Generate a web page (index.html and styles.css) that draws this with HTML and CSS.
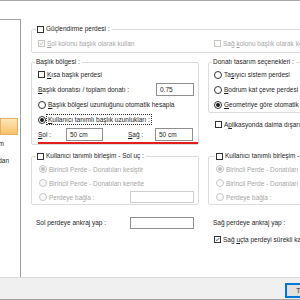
FILE: index.html
```html
<!DOCTYPE html>
<html>
<head>
    <meta charset="utf-8">
    <title>Perde Ayarları</title>
    <link rel="stylesheet" href="styles.css">
</head>
<body>
    <div class="window">
        <div class="main">
            <div class="sidebar">
                <ul class="nav">
                    <li class="nav-item active"></li>
                    <li class="nav-item end-m"><span>Donatım</span></li>
                    <li class="nav-item end-lan"><span>Tablodan</span></li>
                </ul>
            </div>

            <div class="content">
                <!-- Güçlendirme -->
                <fieldset class="group group-top">
                    <legend><label class="opt"><span class="box"></span><span>Güçlendirme perdesi :</span></label></legend>
                    <div class="pair">
                        <label class="opt off"><span class="box"><svg viewBox="0 0 7 7"><polyline points="1.2,3.6 2.8,5.1 5.8,1.6"/></svg></span><span><u>S</u>ol kolonu başlık olarak kullan</span></label>
                        <label class="opt off"><span class="box"></span><span>Sağ <u>k</u>olonu başlık olarak kullan</span></label>
                    </div>
                </fieldset>

                <div class="columns">
                    <!-- Başlık bölgesi -->
                    <fieldset class="group">
                        <legend>Başlık bölgesi :</legend>
                        <div class="row"><label class="opt"><span class="box"></span><span><u>K</u>ısa başlık perdesi</span></label></div>
                        <div class="row spread"><span><u>B</u>aşlık donatısı / toplam donatı :</span><span class="field">0.75</span></div>
                        <div class="row"><label class="opt"><span class="radio"></span><span><u>B</u>aşlık bölgesi uzunluğunu otomatik hesapla</span></label></div>
                        <div class="row"><label class="opt"><span class="radio on"></span><span class="focus"><u>K</u>ullanıcı tanımlı başlık uzunlukları :</span></label></div>
                        <div class="row marked">
                            <span class="lbl-sol"><u>S</u>ol :</span><span class="field w37">50 cm</span>
                            <span class="lbl-sag"><u>S</u>ağ :</span><span class="field">50 cm</span>
                        </div>
                    </fieldset>

                    <!-- Donatı tasarım -->
                    <div class="stack">
                        <fieldset class="group group-right">
                            <legend>Donatı tasarım seçenekleri :</legend>
                            <div class="row"><label class="opt"><span class="radio"></span><span>Ta<u>ş</u>ıyıcı sistem perdesi</span></label></div>
                            <div class="row"><label class="opt"><span class="radio"></span><span><u>B</u>odrum kat çevre perdesi</span></label></div>
                            <div class="row"><label class="opt"><span class="radio on"></span><span><u>G</u>eometriye göre otomatik</span></label></div>
                        </fieldset>
                        <div class="row after-group"><label class="opt"><span class="box"></span><span>A<u>p</u>likasyonda daima dışarı</span></label></div>
                    </div>

                    <!-- Sol uç -->
                    <fieldset class="group joint">
                        <legend><label class="opt"><span class="box"></span><span>Kullanıcı tanımlı birleşim - Sol uç :</span></label></legend>
                        <div class="row short"><label class="opt off"><span class="radio on"></span><span>Birincil Perde - Donatıları kesiştir</span></label></div>
                        <div class="row short"><label class="opt off"><span class="radio"></span><span>Birincil Perde - Donatıları kenetle</span></label></div>
                        <div class="row short spread"><label class="opt off"><span class="radio"></span><span>Perdeye bağla :</span></label><span class="field wide off"></span></div>
                    </fieldset>

                    <!-- Sağ uç -->
                    <fieldset class="group joint joint-right">
                        <legend><label class="opt"><span class="box"></span><span>Kullanıcı tanımlı birleşim - Sağ uç :</span></label></legend>
                        <div class="row short"><label class="opt off"><span class="radio on"></span><span>Birincil Perde - Donatıları kesiştir</span></label></div>
                        <div class="row short"><label class="opt off"><span class="radio"></span><span>Birincil Perde - Donatıları kenetle</span></label></div>
                        <div class="row short"><label class="opt off"><span class="radio"></span><span>Perdeye bağla :</span></label></div>
                    </fieldset>

                    <!-- Ankraj -->
                    <div class="row anchor spread"><span>Sol perdeye ankraj yap :</span><span class="field wide"></span></div>
                    <div class="anchor">
                        <div class="row anchor-text">Sağ perdeye ankraj yap :</div>
                        <div class="row anchor-check"><label class="opt"><span class="box"><svg viewBox="0 0 7 7"><polyline points="1.2,3.6 2.8,5.1 5.8,1.6"/></svg></span><span>Sağ <u>u</u>çta perdeyi sürekli kabul et</span></label></div>
                    </div>
                </div>
            </div>
        </div>

        <div class="footer">
            <button class="btn">Tamam</button>
        </div>
    </div>
</body>
</html>
```

FILE: styles.css
```css
* {
    box-sizing: border-box;
}
body {
    margin: 0;
    font-family: "Liberation Sans", Arial, sans-serif;
    font-size: 6.5px;
    color: #1e1e1e;
    background: #fff;
}
u {
    text-decoration-thickness: 1px;
    text-underline-offset: 1px;
}
.window {
    width: 300px;
    height: 300px;
    display: flex;
    flex-direction: column;
    border-top: 1px solid #a9a9a9;
    overflow: hidden;
}
.main {
    flex: 1;
    display: flex;
    min-height: 0;
}

/* sol liste */
.sidebar {
    width: 21px;
    flex: none;
    margin-top: 18px;
    border-top: 1px solid #a0a0a0;
    border-right: 1px solid #a0a0a0;
    overflow: hidden;
}
.nav {
    list-style: none;
    margin: 0;
    padding: 98px 0 0 0;
}
.nav-item {
    height: 17px;
    display: flex;
    align-items: center;
    justify-content: flex-end;
    white-space: nowrap;
}
.nav-item.active {
    margin-right: 2px;
    background: linear-gradient(#fee6b6, #f8c36c);
    border: 1px solid #e8b064;
}
.end-m {
    padding-right: 16px;
}
.end-lan {
    padding-right: 11px;
}

/* içerik */
.content {
    flex: 1;
    min-width: 0;
    padding: 23px 0 0 10px;
    overflow: hidden;
}
.group {
    margin: 0;
    padding: 0 0 0 6px;
    border: 1px solid #dcdcdc;
    border-radius: 2px;
    min-width: 0;
}
.group legend {
    height: 10px;
    line-height: 10px;
    padding: 0 2px 0 1px;
    margin-left: -3px;
    display: flex;
    align-items: center;
    white-space: nowrap;
}
.group-top {
    width: 290px;
    padding: 3px 0 3px 6px;
}
.group-top legend {
    margin-left: -2px;
}
.pair {
    display: grid;
    grid-template-columns: 176px auto;
    height: 12px;
}
.columns {
    display: grid;
    grid-template-columns: 168px 180px;
    column-gap: 9px;
    margin-top: 4px;
    align-items: start;
}
.row {
    height: 15px;
    display: flex;
    align-items: center;
    white-space: nowrap;
}
.row.short {
    height: 14px;
}
.spread {
    justify-content: space-between;
    padding-right: 4px;
}
.marked {
    height: 17px;
    border-bottom: 2px solid #e31c1c;
}
.lbl-sol {
    width: 28px;
}
.lbl-sag {
    width: 27px;
    margin-left: 25px;
}

.opt {
    display: flex;
    align-items: center;
    white-space: nowrap;
}
.box {
    width: 7px;
    height: 7px;
    flex: none;
    margin-right: 2px;
    border: 1px solid #333;
    background: #fff;
    display: flex;
}
.box svg {
    width: 100%;
    height: 100%;
    fill: none;
    stroke: #222;
    stroke-width: 1.1;
}
.radio {
    width: 8px;
    height: 8px;
    flex: none;
    margin-right: 2px;
    border: 1px solid #333;
    border-radius: 50%;
    background: #fff;
    display: flex;
    align-items: center;
    justify-content: center;
}
.radio.on::after {
    content: "";
    width: 4px;
    height: 4px;
    border-radius: 50%;
    background: #1a1a1a;
}
.focus {
    outline: 1px dotted #333;
    outline-offset: 1px;
}
.off {
    color: #a6a6a6;
}
.off .box,
.off .radio {
    border-color: #c6c6c6;
    background: #fafafa;
}
.off .box svg {
    stroke: #b8b8b8;
}
.off .radio.on::after {
    background: #c0c0c0;
}

.field {
    width: 38px;
    height: 13px;
    flex: none;
    padding-left: 3px;
    border: 1px solid #8f8f8f;
    background: #fff;
    display: flex;
    align-items: center;
}
.field.w37 {
    width: 37px;
}
.field.wide {
    width: 64px;
    height: 12px;
}
.field.off {
    border-color: #cfcfcf;
}

.group-right {
    padding-left: 5px;
}
.group-right legend {
    margin-left: -2px;
}
.after-group {
    margin-top: 4px;
    padding-left: 7px;
}
.joint {
    margin-top: 6px;
    padding: 1px 0 0 7px;
}
.joint-right legend {
    margin-left: -1px;
}
.anchor {
    margin-top: 10px;
}
.row.anchor {
    padding-left: 5px;
    padding-right: 5px;
}
.anchor-text {
    padding-left: 5px;
}
.anchor-check {
    margin-top: 2px;
    padding-left: 6px;
}

/* alt çubuk */
.footer {
    height: 23px;
    flex: none;
    padding: 5px 0 0 285px;
    background: #f0f0f0;
    border-top: 1px solid #dadada;
    border-bottom: 1px solid #a0a0a0;
}
.btn {
    width: 44px;
    height: 15px;
    padding: 0;
    font: inherit;
    color: #1e1e1e;
    background: #e1e1e1;
    border: 1px solid #0078d7;
    box-shadow: inset 0 0 0 1px #0078d7;
}
```
